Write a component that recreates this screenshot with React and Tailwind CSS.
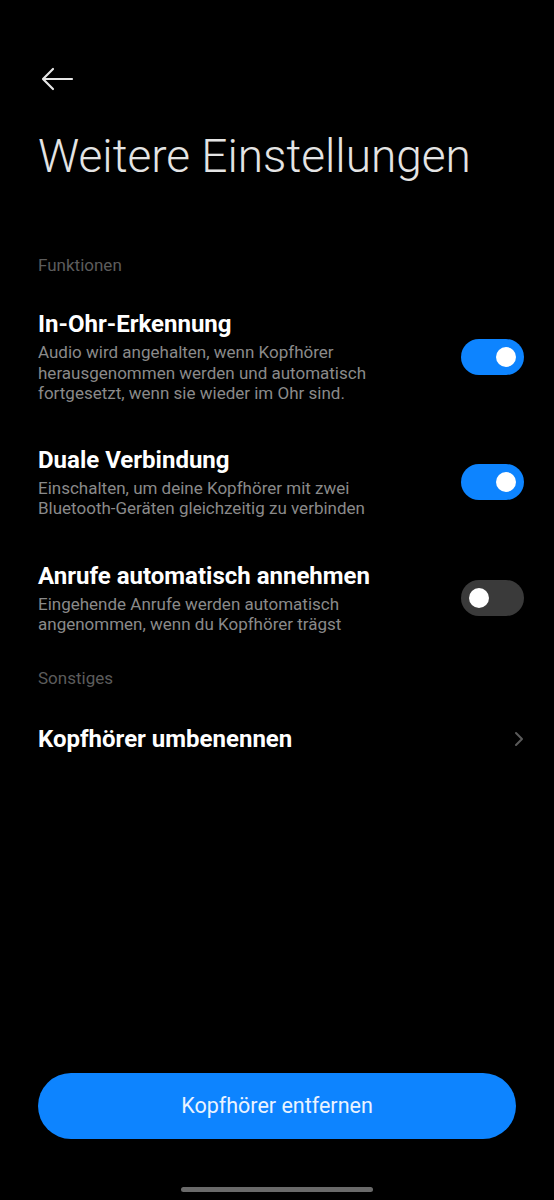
import React from "react";

const Toggle = ({ on }) => (
  <div
    className={`w-[63px] h-[36px] rounded-full flex items-center px-[8px] shrink-0 ${
      on ? "bg-[#0d84ff] justify-end" : "bg-[#3a3a3a] justify-start"
    }`}
  >
    <div className="w-[20px] h-[20px] rounded-full bg-white" />
  </div>
);

const SettingRow = ({ title, desc, on, className = "" }) => (
  <div className={`flex items-center justify-between ${className}`}>
    <div className="w-[380px]">
      <div className="text-[24px] leading-[28px] font-bold text-white">{title}</div>
      <div className="mt-[4px] text-[17px] leading-[20.5px] text-[#8a8a8a]">{desc}</div>
    </div>
    <Toggle on={on} />
  </div>
);

const App = () => {
  return (
    <div className="h-[1200px] bg-black flex flex-col font-['Roboto',sans-serif]">
      <div className="pl-[38px] pr-[30px]">
        {/* Header */}
        <div className="pt-[64px] h-[94px]">
          <svg width="36" height="30" viewBox="0 0 36 30" fill="none">
            <path
              d="M34 15H6M15 5L5 15l10 10"
              stroke="#e6e6e6"
              strokeWidth="2.2"
              strokeLinecap="round"
              strokeLinejoin="round"
            />
          </svg>
        </div>
        <h1 className="mt-[34px] text-[46px] leading-[56px] font-light text-[#e4e4e4]">
          Weitere Einstellungen
        </h1>

        {/* Funktionen */}
        <div className="mt-[71px] text-[17px] leading-[20px] text-[#5c5c5c]">Funktionen</div>

        <SettingRow
          className="mt-[35px]"
          title="In-Ohr-Erkennung"
          desc="Audio wird angehalten, wenn Kopfhörer herausgenommen werden und automatisch fortgesetzt, wenn sie wieder im Ohr sind."
          on
        />
        <SettingRow
          className="mt-[42px]"
          title="Duale Verbindung"
          desc="Einschalten, um deine Kopfhörer mit zwei Bluetooth-Geräten gleichzeitig zu verbinden"
          on
        />
        <SettingRow
          className="mt-[43px]"
          title="Anrufe automatisch annehmen"
          desc="Eingehende Anrufe werden automatisch angenommen, wenn du Kopfhörer trägst"
          on={false}
        />

        {/* Sonstiges */}
        <div className="mt-[33px] text-[17px] leading-[20px] text-[#5c5c5c]">Sonstiges</div>

        <div className="mt-[37px] flex items-center justify-between">
          <div className="text-[24px] leading-[28px] font-bold text-white">Kopfhörer umbenennen</div>
          <svg width="10" height="16" viewBox="0 0 10 16" fill="none">
            <path d="M2 2l6 6-6 6" stroke="#5a5a5a" strokeWidth="2" strokeLinecap="round" strokeLinejoin="round" />
          </svg>
        </div>
      </div>

      {/* Bottom */}
      <div className="mt-auto px-[38px]">
        <button className="w-full h-[66px] rounded-full bg-[#0d84ff] text-[21.5px] text-[#eaf3ff]">
          Kopfhörer entfernen
        </button>
      </div>
      <div className="mt-[48px] mb-[8px] flex justify-center">
        <div className="w-[192px] h-[5px] rounded-full bg-[#6a6a6a]" />
      </div>
    </div>
  );
};

export default App;
